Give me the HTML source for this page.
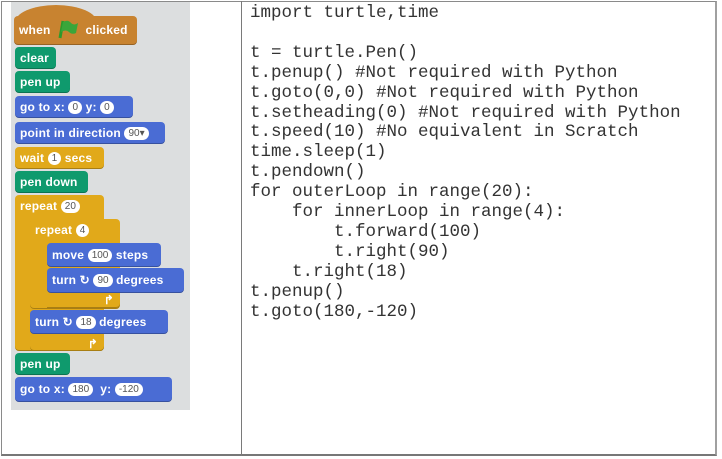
<!DOCTYPE html>
<html><head><meta charset="utf-8"><style>
*{margin:0;padding:0;box-sizing:border-box}
body{width:722px;height:459px;background:#fff;position:relative;overflow:hidden;font-family:"Liberation Sans",sans-serif}
.frame{position:absolute;left:1px;top:1px;width:716px;height:455px;border:1px solid #8a8a8a;border-right:2px solid #a0a0a0;border-bottom:2px solid #777}
.div{position:absolute;left:241px;top:1px;width:1px;height:455px;background:#7a7a7a}
.panel{position:absolute;left:11px;top:2px;width:179px;height:408px;background:#dcdedf}
.b{position:absolute;border-radius:4px;color:#fff;font-weight:bold;font-size:12px;letter-spacing:0.2px;line-height:22px;padding-left:5px;white-space:nowrap;box-shadow:inset 0 -1px 0 rgba(0,0,0,.25)}
.g{background:#0f9a6d}.bl{background:#4a6cd4}.y{background:#e1a91a}.o{background:#c88330}
.p{display:inline-block;background:#fff;color:#555;border-radius:8px;padding:0 4px;line-height:13px;font-size:10px;font-weight:normal;vertical-align:1px;letter-spacing:0}
.code{position:absolute;left:250px;top:4px;font-family:"Liberation Mono",monospace;font-size:17.5px;line-height:19.9px;color:#333;white-space:pre}
</style></head><body>
<div class="frame"></div><div class="div"></div>
<div class="panel"></div>
<div class="o" style="position:absolute;left:15px;top:5px;width:82px;height:24px;border-radius:42px 42px 0 0/18px 18px 0 0"></div>
<div class="b o" style="left:14px;top:16px;width:123px;height:29px;line-height:29px">when <svg width="22" height="20" style="vertical-align:-5px;margin:0 3px"><path d="M3 19 L6 2" stroke="#2c9a2c" stroke-width="3"/><path d="M6 3 Q11 0 14 4 Q17 7 21 4 L19 14 Q15 16 12 13 Q9 10 4 13 Z" fill="#3aa63a"/></svg> clicked</div>
<div class="b g" style="left:15px;top:47px;width:41px">clear</div>
<div class="b g" style="left:15px;top:71px;width:55px">pen up</div>
<div class="b bl" style="left:15px;top:96px;width:118px">go to x: <span class="p">0</span> y: <span class="p">0</span></div>
<div class="b bl" style="left:15px;top:122px;width:150px">point in direction <span class="p">90▾</span></div>
<div class="b y" style="left:15px;top:147px;width:89px">wait <span class="p">1</span> secs</div>
<div class="b g" style="left:15px;top:171px;width:73px">pen down</div>
<div class="b y" style="left:15px;top:195px;width:89px;height:156px;border-radius:4px">repeat <span class="p">20</span></div>
<div class="b y" style="left:30px;top:338px;width:74px;height:13px;text-align:right;padding-right:6px;line-height:12px;font-size:12px">↱</div>
<div class="b y" style="left:30px;top:219px;width:90px;height:90px">repeat <span class="p">4</span></div>
<div class="b y" style="left:47px;top:294px;width:73px;height:14px;text-align:right;padding-right:6px;line-height:13px;font-size:12px;border-radius:0 4px 4px 0">↱</div>
<div class="b bl" style="left:47px;top:243px;width:114px;height:24px;line-height:24px">move <span class="p">100</span> steps</div>
<div class="b bl" style="left:47px;top:268px;width:137px;height:25px;line-height:25px">turn ↻ <span class="p">90</span> degrees</div>
<div class="b bl" style="left:30px;top:310px;width:138px;height:24px;line-height:24px">turn ↻ <span class="p">18</span> degrees</div>
<div class="b g" style="left:15px;top:353px;width:55px">pen up</div>
<div class="b bl" style="left:15px;top:377px;width:157px;height:25px;line-height:25px">go to x: <span class="p">180</span>&nbsp; y: <span class="p">-120</span></div>
<div class="code">import turtle,time

t = turtle.Pen()
t.penup() #Not required with Python
t.goto(0,0) #Not required with Python
t.setheading(0) #Not required with Python
t.speed(10) #No equivalent in Scratch
time.sleep(1)
t.pendown()
for outerLoop in range(20):
    for innerLoop in range(4):
        t.forward(100)
        t.right(90)
    t.right(18)
t.penup()
t.goto(180,-120)</div>
</body></html>
